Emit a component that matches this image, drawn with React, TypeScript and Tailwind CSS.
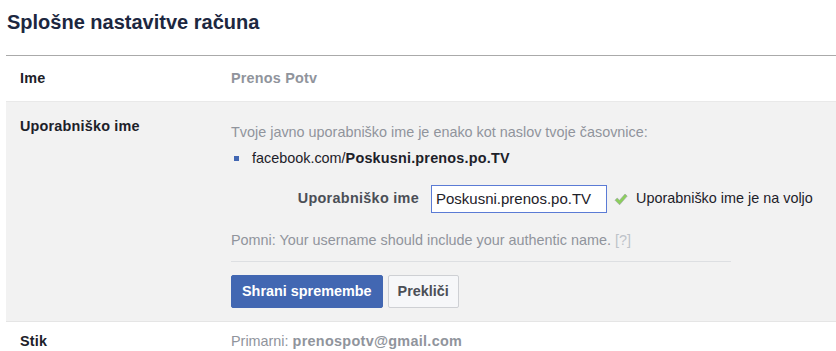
export default function App() {
  return (
    <div className="w-[836px] h-[351px] overflow-hidden bg-white text-[14.4px] text-[#1d2129]" style={{ fontFamily: '"Liberation Sans", Arial, sans-serif' }}>
      <div className="pl-[7px] pt-[9px] h-[55px]">
        <h2 className="text-[20px] font-bold leading-[26px] text-[#1c2740]">Splošne nastavitve računa</h2>
      </div>
      <div className="ml-[6px] border-t border-[#aaaaaa]">
        <div className="flex h-[46px] items-center border-b border-[#e9e9e9]">
          <div className="w-[225px] pl-[14px] font-bold tracking-[0.2px]">Ime</div>
          <div className="font-bold tracking-[0.2px] text-[#90949c]">Prenos Potv</div>
        </div>
        <div className="flex bg-[#f2f2f2] pt-[15px] pb-[13px] border-b border-[#e5e5e5]">
          <div className="w-[225px] pl-[14px] font-bold tracking-[0.2px] leading-[18px]">Uporabniško ime</div>
          <div className="flex-1">
            <p className="mt-[6px] leading-[18px] text-[#90949c]">Tvoje javno uporabniško ime je enako kot naslov tvoje časovnice:</p>
            <div className="mt-[8px] flex items-center leading-[18px]">
              <span className="ml-[3px] mr-[13px] w-[5px] h-[5px] bg-[#4267b2]"></span>
              <span>facebook.com/<b className="tracking-[0.2px]">Poskusni.prenos.po.TV</b></span>
            </div>
            <div className="mt-[18px] flex items-center">
              <div className="w-[188px] text-right font-bold tracking-[0.3px] text-[#4b4f56]">Uporabniško ime</div>
              <div className="ml-[12px] w-[176px] h-[28px] border border-[#5b7bd5] bg-white pl-[4px] flex items-center text-[15px] text-[#1d2129]">Poskusni.prenos.po.TV</div>
              <svg className="ml-[7px]" width="14" height="13" viewBox="0 0 14 13">
                <path d="M1 7.2 L3.2 5 L5.5 7.3 L11 1 L13.2 3.1 L5.6 11.8 Z" fill="#8ccf5c" stroke="#9aa0a6" strokeWidth="0.6" strokeLinejoin="round" />
              </svg>
              <span className="ml-[8px] text-[#1d2129]">Uporabniško ime je na voljo</span>
            </div>
            <p className="mt-[18px] leading-[18px] text-[#90949c]">Pomni: Your username should include your authentic name. <span className="text-[#bec3c9]">[?]</span></p>
            <div className="mt-[12px] w-[500px] border-t border-[#dddfe2]"></div>
            <div className="mt-[13px] flex gap-[5px]">
              <button className="h-[33px] px-[10px] rounded-[2px] bg-[#4267b2] border border-[#4267b2] text-white font-bold">Shrani spremembe</button>
              <button className="h-[33px] px-[9px] rounded-[2px] bg-[#f6f7f9] border border-[#ced0d4] text-[#4b4f56] font-bold">Prekliči</button>
            </div>
          </div>
        </div>
        <div className="flex pt-[10px] leading-[18px]">
          <div className="w-[225px] pl-[14px] font-bold tracking-[0.2px]">Stik</div>
          <div className="text-[#90949c]">Primarni: <b className="tracking-[0.3px] text-[#90949c]">prenospotv@gmail.com</b></div>
        </div>
      </div>
    </div>
  );
}
